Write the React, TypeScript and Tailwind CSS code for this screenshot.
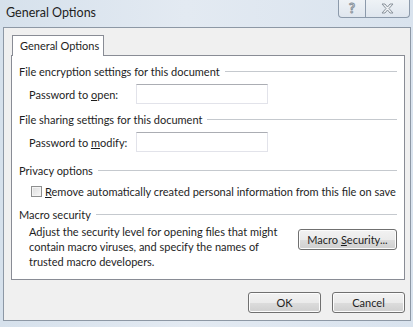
const font = { fontFamily: 'Lato, "Noto Sans", sans-serif' }

function SectionHeader({ label }: { label: string }) {
  return (
    <div className="flex h-[15px] items-center pl-[7px] pr-[7px]">
      <span className="whitespace-nowrap leading-[15px]">{label}</span>
      <div className="ml-[5px] h-px flex-1 bg-[#c5c9ce]" />
    </div>
  )
}

function TextBox() {
  return (
    <div className="h-[20px] w-[132px] shrink-0 border border-[#e2e3ea] border-t-[#abadb3] bg-white" />
  )
}

function WinButton({ children, className = '' }: { children: React.ReactNode; className?: string }) {
  return (
    <div
      className={`flex h-[21px] shrink-0 items-center justify-center rounded-[3px] border border-[#707070] bg-[linear-gradient(#f2f2f2_0%,#ebebeb_50%,#dddddd_50%,#cfcfcf_100%)] leading-none shadow-[inset_0_0_0_1px_#fcfcfc] ${className}`}
    >
      <span className="whitespace-nowrap">{children}</span>
    </div>
  )
}

export default function App() {
  return (
    <div
      className="flex h-[327px] w-[413px] flex-col overflow-hidden bg-[linear-gradient(90deg,#d6e1ec,#e3eaf2_45%,#d9e3ee)] text-[11px] text-[#1e1e1e]"
      style={font}
    >
      {/* title bar */}
      <div className="flex h-[27px] shrink-0 items-start justify-between">
        <span className="mt-[4px] pl-[6px] text-[12.5px] leading-[18px] text-[#1e1e1e]">General Options</span>
        <div className="mr-[3px] flex h-[18px]">
          <div className="flex w-[28px] items-center justify-center rounded-bl-[4px] border border-t-0 border-[#8c9aab] bg-[linear-gradient(#eef2f6,#dfe6ee)] text-[13px] font-bold leading-none text-[#e9edf1] [-webkit-text-stroke:1px_#8a939c]">
            ?
          </div>
          <div className="flex w-[44px] items-center justify-center rounded-br-[4px] border border-l-0 border-t-0 border-[#8c9aab] bg-[linear-gradient(#eef2f6,#dfe6ee)]">
            <svg width="13" height="11" viewBox="0 0 13 11">
              <path
                d="M1 1h3l2.5 3 2.5-3h3l-4 4.5 4 4.5h-3l-2.5-3-2.5 3h-3l4-4.5z"
                fill="#eef1f4"
                stroke="#8a939c"
                strokeWidth="1"
                strokeLinejoin="round"
              />
            </svg>
          </div>
        </div>
      </div>

      {/* dialog body */}
      <div className="ml-[3px] mr-[2px] flex h-[294px] shrink-0 flex-col border border-[#8d98a5] bg-[#f0f0f0] pl-[7px] pr-[5px] pt-[7px]">
        <div className="relative z-10 -mb-px ml-[1px] flex h-[21px] w-[92px] items-center whitespace-nowrap border border-b-0 border-[#898c95] bg-white pl-[7px]">
          General Options
        </div>
        <div className="flex h-[225px] w-[394px] flex-col border border-[#898c95] bg-white">
          <div className="mt-[8px]">
            <SectionHeader label="File encryption settings for this document" />
          </div>
          <div className="mt-[5px] flex items-center pl-[17px]">
            <span className="w-[107px] whitespace-nowrap leading-[15px]">
              Password to <span className="underline">o</span>pen:
            </span>
            <TextBox />
          </div>
          <div className="mt-[8px]">
            <SectionHeader label="File sharing settings for this document" />
          </div>
          <div className="mt-[5px] flex items-center pl-[17px]">
            <span className="w-[107px] whitespace-nowrap leading-[15px]">
              Password to <span className="underline">m</span>odify:
            </span>
            <TextBox />
          </div>
          <div className="mt-[11px]">
            <SectionHeader label="Privacy options" />
          </div>
          <div className="mt-[6px] flex items-center pl-[19px]">
            <div className="h-[11px] w-[11px] shrink-0 border border-[#8e8f8f] bg-[linear-gradient(135deg,#dcdcdc,#f8f8f8)] shadow-[inset_0_0_0_1px_#f4f4f4]" />
            <span className="ml-[3px] whitespace-nowrap leading-[15px]">
              <span className="underline">R</span>emove automatically created personal information from this file on save
            </span>
          </div>
          <div className="mt-[8px]">
            <SectionHeader label="Macro security" />
          </div>
          <div className="mt-[2px] flex items-start justify-between pl-[17px] pr-[7px]">
            <p className="w-[252px] leading-[15px]">
              Adjust the security level for opening files that might contain macro viruses, and specify the names of
              trusted macro developers.
            </p>
            <WinButton className="mt-[5px] w-[99px]">
              Macro <span className="underline">S</span>ecurity...
            </WinButton>
          </div>
        </div>
        <div className="mt-[12px] flex justify-end gap-[11px] pr-[0px]">
          <WinButton className="w-[73px]">OK</WinButton>
          <WinButton className="w-[73px]">Cancel</WinButton>
        </div>
      </div>
    </div>
  )
}
